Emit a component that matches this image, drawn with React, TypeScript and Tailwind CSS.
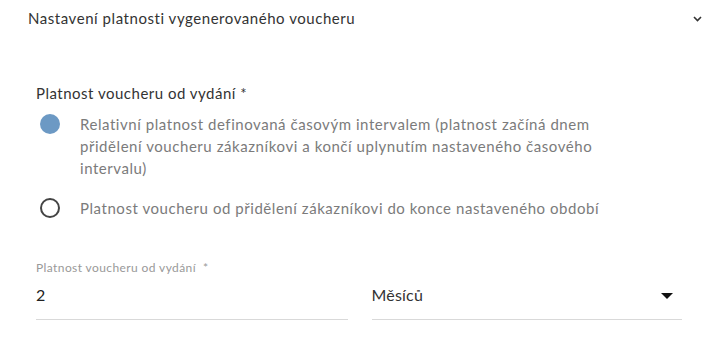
import { useState } from "react";

const font = { fontFamily: "Lato, 'Noto Sans', sans-serif" };

type Mode = "relative" | "period";

function Radio({ checked }: { checked: boolean }) {
  return (
    <span className="w-[24px] h-[22px] flex items-center justify-center shrink-0 ml-[2px]">
      {checked ? (
        <span className="w-[20px] h-[20px] rounded-full bg-[#6c99c4]" />
      ) : (
        <span className="w-[20px] h-[20px] rounded-full border-2 border-[#444]" />
      )}
    </span>
  );
}

export default function App() {
  const [mode, setMode] = useState<Mode>("relative");
  const [amount, setAmount] = useState("2");

  return (
    <div className="w-[720px] h-[352px] bg-white overflow-hidden" style={font}>
      <div className="flex items-center justify-between pl-[28px] pr-[18px] h-[37px]">
        <span className="text-[15px] tracking-[0.55px] text-[#333]">Nastavení platnosti vygenerovaného voucheru</span>
        <svg width="9" height="6" viewBox="0 0 9 6" className="mt-[1px]">
          <path d="M1 1l3.5 3.5L8 1" fill="none" stroke="#333" strokeWidth="1.6" />
        </svg>
      </div>

      <div className="pl-[36px] pr-[38px] pt-[45px]">
        <div className="text-[15px] tracking-[0.5px] text-[#333] leading-[22px]">Platnost voucheru od vydání *</div>

        <div className="mt-[9px] flex flex-col gap-[18px]">
          <label className="flex items-start gap-[18px] cursor-pointer" onClick={() => setMode("relative")}>
            <Radio checked={mode === "relative"} />
            <span className="max-w-[545px] text-[15px] tracking-[0.55px] leading-[22px] text-[#7b7b7b]">
              Relativní platnost definovaná časovým intervalem (platnost začíná dnem přidělení voucheru zákazníkovi a končí uplynutím nastaveného časového intervalu)
            </span>
          </label>

          <label className="flex items-start gap-[18px] cursor-pointer" onClick={() => setMode("period")}>
            <Radio checked={mode === "period"} />
            <span className="text-[15px] tracking-[0.55px] leading-[22px] text-[#7b7b7b]">
              Platnost voucheru od přidělení zákazníkovi do konce nastaveného období
            </span>
          </label>
        </div>

        <div className="mt-[42px] flex gap-[24px]">
          <div className="w-[312px] border-b border-[#d9d9d9] pb-[12px]">
            <div className="text-[12px] tracking-[0.4px] text-[#999] leading-[14px]">Platnost voucheru od vydání &nbsp;*</div>
            <input
              value={amount}
              onChange={(e) => setAmount(e.target.value)}
              className="mt-[8px] w-full h-[24px] text-[16px] text-[#222] outline-none bg-transparent"
              style={font}
            />
          </div>
          <div className="w-[311px] border-b border-[#d9d9d9] pb-[12px] flex items-end">
            <div className="flex items-center justify-between w-full h-[24px] pr-[9px]">
              <span className="text-[16px] tracking-[0.2px] text-[#333]">Měsíců</span>
              <svg width="12" height="6" viewBox="0 0 12 6" className="mt-[2px]">
                <path d="M0 0h12L6 6z" fill="#111" />
              </svg>
            </div>
          </div>
        </div>
      </div>
    </div>
  );
}
